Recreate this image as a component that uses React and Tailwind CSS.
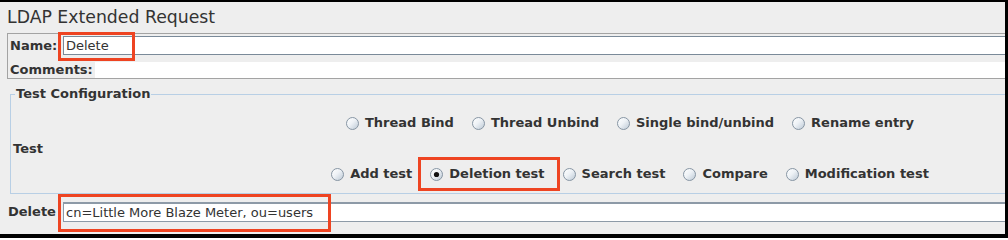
import React from "react";

const TOP_ROW = ["Thread Bind", "Thread Unbind", "Single bind/unbind", "Rename entry"];
const BOTTOM_ROW = ["Add test", "Deletion test", "Search test", "Compare", "Modification test"];

// red annotation frame drawn over the screenshot
function Marker({ className }) {
  return <span className={`pointer-events-none absolute border-[3px] border-[#ee4422] ${className}`} />;
}

function Radio({ checked }) {
  return (
    <svg width="13" height="13" viewBox="0 0 13 13" className="shrink-0">
      <circle cx="6.5" cy="6.5" r="6" fill="url(#radioFill)" stroke="#8795a3" />
      {checked && <circle cx="6.5" cy="6.5" r="2.6" fill="#111" />}
    </svg>
  );
}

function RadioItem({ label, checked, marked }) {
  return (
    <label className="relative flex h-5 items-center gap-[6px] whitespace-nowrap">
      <Radio checked={checked} />
      <span>{label}</span>
      {marked && <Marker className="-left-[12px] -top-[7px] h-[34px] w-[142px]" />}
    </label>
  );
}

export default function App() {
  return (
    <div className="h-[238px] w-[1008px] bg-black pt-[2px] font-['DejaVu_Sans',sans-serif] text-[#333333]">
      <svg width="0" height="0" className="absolute">
        <defs>
          <linearGradient id="radioFill" x1="0" y1="0" x2="1" y2="1">
            <stop offset="0%" stopColor="#ffffff" />
            <stop offset="45%" stopColor="#eef2f6" />
            <stop offset="100%" stopColor="#b9c6d3" />
          </linearGradient>
        </defs>
      </svg>

      <div className="h-[232px] w-[1005px] overflow-hidden bg-[#eeeeee]">
        <div className="w-[1012px]">
          {/* Title */}
          <div className="flex h-[31px] items-center pl-[7px] text-[17.3px] leading-none">
            LDAP Extended Request
          </div>

          {/* Name / comments */}
          <div className="ml-[7px] border border-[#a3a3a3] pl-[2px] pt-[2px] text-[13px]">
            <div className="flex h-[19px] items-center">
              <span className="w-[53px] shrink-0 font-bold">Name:</span>
              <div className="relative flex h-[19px] flex-1 items-center border border-[#7a8a99] bg-white pl-[2px]">
                Delete
                <Marker className="-left-[6px] -top-[5px] h-[29px] w-[77px]" />
              </div>
            </div>
            <div className="mt-[7px] flex h-[16px] items-center">
              <span className="w-[85px] shrink-0 font-bold">Comments:</span>
              <div className="h-[16px] flex-1 bg-white" />
            </div>
          </div>

          {/* Test configuration */}
          <fieldset className="ml-[10px] mt-[7px] border border-[#b8cfe5] text-[13px] font-bold">
            <legend className="ml-[4px] px-[1px] leading-[16px]">Test Configuration</legend>
            <div className="flex pb-[9px] pt-[11px]">
              <div className="flex w-[238px] shrink-0 items-center pl-[2px]">Test</div>
              <div className="flex flex-1 flex-col gap-[31px]">
                <div className="flex justify-center gap-[18px]">
                  {TOP_ROW.map((t) => (
                    <RadioItem key={t} label={t} />
                  ))}
                </div>
                <div className="flex justify-center gap-[18px]">
                  {BOTTOM_ROW.map((t) => (
                    <RadioItem key={t} label={t} checked={t === "Deletion test"} marked={t === "Deletion test"} />
                  ))}
                </div>
              </div>
            </div>
          </fieldset>

          {/* Delete DN */}
          <div className="mt-[8px] flex h-[20px] items-center pl-[8px] text-[13px]">
            <span className="w-[55px] shrink-0 font-bold">Delete</span>
            <div className="relative flex h-[20px] flex-1 items-center border-b border-l border-t-2 border-[#8d9aa7] bg-white pl-[2px]">
              cn=Little More Blaze Meter, ou=users
              <Marker className="-left-[6px] -top-[10px] h-[38px] w-[273px]" />
            </div>
          </div>
        </div>
      </div>
    </div>
  );
}
